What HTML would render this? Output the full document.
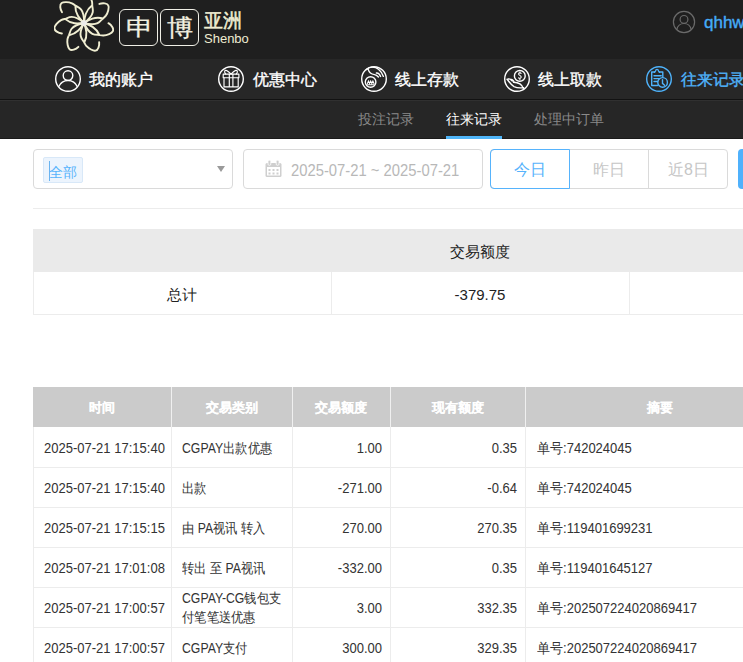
<!DOCTYPE html>
<html><head><meta charset="utf-8">
<style>
*{box-sizing:border-box;margin:0;padding:0}
html,body{width:743px;height:662px;overflow:hidden;background:#fff;font-family:"Liberation Sans",sans-serif;position:relative}
.abs{position:absolute}
.navt{position:absolute;top:69px;color:#fff;font-size:16px;line-height:22px;white-space:nowrap;-webkit-text-stroke:0.35px currentColor}
.subt{position:absolute;top:109px;color:#8a8a8a;font-size:14px;line-height:20px;white-space:nowrap}
.box{position:absolute;border:1px solid #dadada;border-radius:4px;background:#fff}
.btn{position:absolute;top:150px;height:40px;color:#c6c6c6;font-size:16px;line-height:40px;text-align:center}
.hl{position:absolute;height:1px;background:#ececec}
.vl{position:absolute;width:1px;background:#ececec}
.c{position:absolute;font-size:14px;line-height:18px;color:#333;white-space:nowrap;transform:scaleX(0.93);transform-origin:0 0}
.cr{transform-origin:100% 0}
.h{position:absolute;top:399px;font-size:13px;line-height:18px;color:#fff;font-weight:bold;text-align:center;-webkit-text-stroke:0.1px #fff}
</style></head><body>
<div class="abs" style="left:0;top:0;width:743px;height:59px;background:#1f1f1f"></div>
<div class="abs" style="left:0;top:59px;width:743px;height:40px;background:#272727"></div>
<div class="abs" style="left:0;top:99px;width:743px;height:1px;background:#121212"></div>
<div class="abs" style="left:0;top:100px;width:743px;height:1px;background:#303030"></div>
<div class="abs" style="left:0;top:101px;width:743px;height:37px;background:#262626"></div>
<div class="abs" style="left:0;top:138px;width:743px;height:1px;background:#1a1a1a"></div>

<svg class="abs" style="left:54px;top:-7px" width="60" height="60" viewBox="-30 -30 60 60"><g fill="none" stroke="#f0eed2" stroke-width="1.9" stroke-linecap="round"><g transform="rotate(25.00)"><path d="M0,0 C2.2,-4 4.2,-9.5 3.4,-13.2 C2.8,-16 0.8,-18 0,-19.5 C-0.6,-20.8 -1,-21.8 -2,-23 C-4.5,-25.8 -9,-28.2 -11.2,-27.8 C-13.8,-27.4 -15.3,-23 -14.9,-19.4 M0,0 C-2,-6 -4,-12 0,-19.5"/></g><g transform="rotate(76.43)"><path d="M0,0 C2.2,-4 4.2,-9.5 3.4,-13.2 C2.8,-16 0.8,-18 0,-19.5 C-0.6,-20.8 -1,-21.8 -2,-23 C-4.5,-25.8 -9,-28.2 -11.2,-27.8 C-13.8,-27.4 -15.3,-23 -14.9,-19.4 M0,0 C-2,-6 -4,-12 0,-19.5"/></g><g transform="rotate(127.86)"><path d="M0,0 C2.2,-4 4.2,-9.5 3.4,-13.2 C2.8,-16 0.8,-18 0,-19.5 C-0.6,-20.8 -1,-21.8 -2,-23 C-4.5,-25.8 -9,-28.2 -11.2,-27.8 C-13.8,-27.4 -15.3,-23 -14.9,-19.4 M0,0 C-2,-6 -4,-12 0,-19.5"/></g><g transform="rotate(179.29)"><path d="M0,0 C2.2,-4 4.2,-9.5 3.4,-13.2 C2.8,-16 0.8,-18 0,-19.5 C-0.6,-20.8 -1,-21.8 -2,-23 C-4.5,-25.8 -9,-28.2 -11.2,-27.8 C-13.8,-27.4 -15.3,-23 -14.9,-19.4 M0,0 C-2,-6 -4,-12 0,-19.5"/></g><g transform="rotate(230.71)"><path d="M0,0 C2.2,-4 4.2,-9.5 3.4,-13.2 C2.8,-16 0.8,-18 0,-19.5 C-0.6,-20.8 -1,-21.8 -2,-23 C-4.5,-25.8 -9,-28.2 -11.2,-27.8 C-13.8,-27.4 -15.3,-23 -14.9,-19.4 M0,0 C-2,-6 -4,-12 0,-19.5"/></g><g transform="rotate(282.14)"><path d="M0,0 C2.2,-4 4.2,-9.5 3.4,-13.2 C2.8,-16 0.8,-18 0,-19.5 C-0.6,-20.8 -1,-21.8 -2,-23 C-4.5,-25.8 -9,-28.2 -11.2,-27.8 C-13.8,-27.4 -15.3,-23 -14.9,-19.4 M0,0 C-2,-6 -4,-12 0,-19.5"/></g><g transform="rotate(333.57)"><path d="M0,0 C2.2,-4 4.2,-9.5 3.4,-13.2 C2.8,-16 0.8,-18 0,-19.5 C-0.6,-20.8 -1,-21.8 -2,-23 C-4.5,-25.8 -9,-28.2 -11.2,-27.8 C-13.8,-27.4 -15.3,-23 -14.9,-19.4 M0,0 C-2,-6 -4,-12 0,-19.5"/></g></g><circle r="2.8" fill="#ededea"/></svg>
<div class="abs" style="left:119px;top:9px;width:39px;height:37px;border:1.3px solid #f0efe6;border-radius:6px;color:#f2f0e0;font-size:25px;line-height:34px;text-align:center"><span style="display:inline-block;transform:scale(1.1,0.92) translateX(1.5px);-webkit-text-stroke:0.3px #f2f0e0">申</span></div>
<div class="abs" style="left:160px;top:9px;width:39px;height:37px;border:1.3px solid #f0efe6;border-radius:6px;color:#f2f0e0;font-size:25px;line-height:34px;text-align:center"><span style="display:inline-block;transform:scale(1.04,0.95);-webkit-text-stroke:0.3px #f2f0e0">博</span></div>
<div class="abs" style="left:204px;top:10px;color:#efedd2;font-size:19px;line-height:22px;-webkit-text-stroke:0.5px #efedd2">亚洲</div>
<div class="abs" style="left:204px;top:31px;color:#efedd2;font-size:13px;line-height:15px">Shenbo</div>

<svg class="abs" style="left:669px;top:7px" width="30" height="30" viewBox="-15 -15 30 30"><g fill="none" stroke="#6a6a6a" stroke-width="1.2"><circle r="10.6"/><circle cx="0" cy="-2.6" r="3.9"/><path d="M-7.2,7.6 A7.3,7.3 0 0 1 7.2,7.6"/></g></svg>
<div class="abs" style="left:704px;top:12px;color:#45acf8;font-size:17px;line-height:22px;-webkit-text-stroke:0.4px #45acf8">qhhw</div>

<svg class="abs" style="left:53px;top:64px" width="30" height="30" viewBox="-15 -15 30 30"><g fill="none" stroke="#fff" stroke-width="1.4" stroke-linecap="round" stroke-linejoin="round"><circle r="12.3"/><circle cx="0" cy="-3.4" r="4.8"/><path d="M-9.2,7.6 A10,10 0 0 1 9.2,7.6"/></g></svg>
<svg class="abs" style="left:216px;top:64px" width="30" height="30" viewBox="-15 -15 30 30"><g fill="none" stroke="#fff" stroke-width="1.4" stroke-linecap="round" stroke-linejoin="round"><circle r="12.3"/><g stroke-width="1.15"><rect x="-7.8" y="-4.9" width="15.7" height="3.6"/><path d="M-7,-1.3 V7.9 H7.2 V-1.3 M-1.7,-4.9 V7.9 M1.9,-4.9 V7.9"/><path d="M0.1,-4.9 C-2,-7 -4,-9 -5.5,-8.6 C-6.8,-8.2 -6.6,-6.2 -5.2,-4.9 M0.1,-4.9 C2,-7 4,-9 5.5,-8.6 C6.8,-8.2 6.6,-6.2 5.2,-4.9"/></g></g></svg>
<svg class="abs" style="left:359px;top:64px" width="30" height="30" viewBox="-15 -15 30 30"><g fill="none" stroke="#fff" stroke-width="1.4" stroke-linecap="round" stroke-linejoin="round"><circle r="12.3"/><circle cx="-3.4" cy="3" r="5.3"/><path d="M-6.6,4.4 L-5.5,2 L-4.4,4.4 L-3.3,2 L-2.2,4.4 L-1.1,2 L0,4.4 M-6.6,5.8 H0" stroke-width="1.1" stroke-linejoin="miter"/><path d="M-7.8,-9.6 C-4.5,-12.6 1,-12.6 4.5,-9.8 C6.6,-8 8.5,-5.2 9.4,-2.6 M-5.8,-9.6 C-5,-6.6 -2.5,-4.8 0.5,-4.4 C2.2,-4.2 3.4,-3.2 4.4,-2 M2.4,-6 C4,-6.3 5.6,-5 6.6,-2.6" /></g></svg>
<svg class="abs" style="left:502px;top:64px" width="30" height="30" viewBox="-15 -15 30 30"><g fill="none" stroke="#fff" stroke-width="1.4" stroke-linecap="round" stroke-linejoin="round"><circle r="12.3"/><circle cx="2.8" cy="-3.1" r="5.4"/><path d="M4.1,-5.6 C3.3,-6.4 1.6,-6.3 1.6,-5 C1.6,-3.6 4.2,-3.6 4.2,-1.9 C4.2,-0.6 2.4,-0.4 1.5,-1.2 M2.9,-7 V-6.2 M2.9,-0.4 V0.4" stroke-width="1.1"/><path d="M-10,0.2 C-8,2.5 -6,6 -3,7.6 C0,9 4,9 6.6,8.6 M-8.8,0 C-7.4,-0.6 -6,0.5 -4.7,2 M-6.3,0.7 C-5,0 -3.6,1.5 -2.7,3.3 M-3.5,3.3 C1,3.5 5,5.5 6.4,9.5"/></g></svg>
<svg class="abs" style="left:644px;top:64px" width="30" height="30" viewBox="-15 -15 30 30"><g fill="none" stroke="#4fb3fb" stroke-width="1.4" stroke-linecap="round" stroke-linejoin="round"><circle r="12.3"/><path d="M-1.5,6.5 H-7.3 V-7 H-4.2 M0.2,-7 H3.8 V-1.8" /><path d="M-4.6,-6.6 C-4,-7.6 -3.6,-7.4 -3.3,-8.3 A1.3,1.3 0 1 1 -0.7,-8.3 C-0.4,-7.4 0,-7.6 0.6,-6.6" stroke-width="1.2"/><path d="M-5,-3.3 H2.2 M-5,-0.4 H0.2 M-5,2.5 H-1.5"/><circle cx="3.6" cy="3.4" r="4.8"/><path d="M3.5,0.6 V4.4 L5.6,6.2"/></g></svg>
<div class="navt" style="left:89px">我的账户</div>
<div class="navt" style="left:253px">优惠中心</div>
<div class="navt" style="left:395px">线上存款</div>
<div class="navt" style="left:538px">线上取款</div>
<div class="navt" style="left:681px;color:#4fb3fb">往来记录</div>

<div class="subt" style="left:358px">投注记录</div>
<div class="subt" style="left:446px;color:#fff">往来记录</div>
<div class="abs" style="left:446px;top:136px;width:56px;height:3px;background:#4fb5f8"></div>
<div class="subt" style="left:534px">处理中订单</div>

<div class="box" style="left:33px;top:149px;width:200px;height:40px"></div>
<div class="abs" style="left:43px;top:157px;width:40px;height:26px;background:#ecf4fd;border:1px solid #d8e8f8;border-radius:2px"></div>
<div class="abs" style="left:49px;top:161px;width:1px;height:20px;background:#6ab4f0"></div>
<div class="abs" style="left:49px;top:162px;color:#56b3fc;font-size:14px;line-height:20px">全部</div>
<div class="abs" style="left:217px;top:166px;width:0;height:0;border-left:4px solid transparent;border-right:4px solid transparent;border-top:6px solid #9a9a9a"></div>

<div class="box" style="left:243px;top:149px;width:240px;height:40px"></div>
<svg class="abs" style="left:265px;top:160px" width="18" height="18" viewBox="0 0 18 18">
<rect x="0.5" y="3" width="16" height="14" rx="1.5" fill="#cfcfcf"/><rect x="2" y="7" width="13" height="8.5" fill="#fff"/>
<rect x="3" y="0.3" width="2.8" height="5" rx="1.2" fill="#cfcfcf" stroke="#fff" stroke-width="0.8"/><rect x="11.2" y="0.3" width="2.8" height="5" rx="1.2" fill="#cfcfcf" stroke="#fff" stroke-width="0.8"/>
<g fill="#cfcfcf"><rect x="3.5" y="9" width="2" height="2"/><rect x="7.5" y="9" width="2" height="2"/><rect x="11.5" y="9" width="2" height="2"/><rect x="3.5" y="12.5" width="2" height="2"/><rect x="7.5" y="12.5" width="2" height="2"/><rect x="11.5" y="12.5" width="2" height="2"/></g>
</svg>
<div class="abs" style="left:291px;top:161px;color:#b8b8b8;font-size:16px;line-height:20px;transform:scaleX(0.925);transform-origin:0 0;white-space:nowrap">2025-07-21 ~ 2025-07-21</div>

<div class="abs" style="left:490px;top:149px;width:238px;height:40px;border:1px solid #dadada;border-radius:4px"></div>
<div class="abs" style="left:648px;top:149px;width:1px;height:40px;background:#dadada"></div>
<div class="abs" style="left:490px;top:149px;width:80px;height:40px;border:1px solid #56b3fc;border-radius:4px 0 0 4px"></div>
<div class="btn" style="left:490px;width:80px;color:#56b3fc">今日</div>
<div class="btn" style="left:570px;width:78px">昨日</div>
<div class="btn" style="left:649px;width:79px">近8日</div>
<div class="abs" style="left:738px;top:149px;width:12px;height:40px;background:#4fb1fc;border-radius:4px"></div>
<div class="hl" style="left:33px;top:208px;width:710px"></div>

<div class="abs" style="left:33px;top:229px;width:710px;height:43px;background:#eaeaea"></div>
<div class="abs" style="left:33px;top:242px;width:894px;text-align:center;font-size:15px;line-height:20px;color:#222">交易额度</div>
<div class="vl" style="left:33px;top:272px;height:43px"></div>
<div class="vl" style="left:331px;top:272px;height:42px"></div>
<div class="vl" style="left:629px;top:272px;height:42px"></div>
<div class="hl" style="left:33px;top:314px;width:710px"></div>
<div class="abs" style="left:33px;top:285px;width:298px;text-align:center;font-size:15px;line-height:20px;color:#222">总计</div>
<div class="abs" style="left:331px;top:285px;width:298px;text-align:center;font-size:15px;line-height:20px;color:#222">-379.75</div>

<div class="abs" style="left:33px;top:387px;width:710px;height:40px;background:#cbcbcb"></div>
<div class="h" style="left:33px;width:138px">时间</div>
<div class="h" style="left:171px;width:121px">交易类别</div>
<div class="h" style="left:292px;width:98px">交易额度</div>
<div class="h" style="left:390px;width:135px">现有额度</div>
<div class="h" style="left:525px;width:270px">摘要</div>
<div class="abs" style="left:171px;top:387px;width:1px;height:40px;background:#f0f0f0"></div>
<div class="abs" style="left:292px;top:387px;width:1px;height:40px;background:#f0f0f0"></div>
<div class="abs" style="left:390px;top:387px;width:1px;height:40px;background:#f0f0f0"></div>
<div class="abs" style="left:525px;top:387px;width:1px;height:40px;background:#f0f0f0"></div>
<div class="hl" style="left:33px;top:467px;width:710px"></div>
<div class="c" style="left:44px;top:439px">2025-07-21 17:15:40</div>
<div class="c" style="left:182px;top:439px;transform:scaleX(0.875)">CGPAY出款优惠</div>
<div class="c cr" style="left:292px;width:90px;text-align:right;top:439px">1.00</div>
<div class="c cr" style="left:390px;width:127px;text-align:right;top:439px">0.35</div>
<div class="c" style="left:537px;top:439px">单号:742024045</div>
<div class="hl" style="left:33px;top:507px;width:710px"></div>
<div class="c" style="left:44px;top:479px">2025-07-21 17:15:40</div>
<div class="c" style="left:182px;top:479px;transform:scaleX(0.875)">出款</div>
<div class="c cr" style="left:292px;width:90px;text-align:right;top:479px">-271.00</div>
<div class="c cr" style="left:390px;width:127px;text-align:right;top:479px">-0.64</div>
<div class="c" style="left:537px;top:479px">单号:742024045</div>
<div class="hl" style="left:33px;top:547px;width:710px"></div>
<div class="c" style="left:44px;top:519px">2025-07-21 17:15:15</div>
<div class="c" style="left:182px;top:519px;transform:scaleX(0.875)">由 PA视讯 转入</div>
<div class="c cr" style="left:292px;width:90px;text-align:right;top:519px">270.00</div>
<div class="c cr" style="left:390px;width:127px;text-align:right;top:519px">270.35</div>
<div class="c" style="left:537px;top:519px">单号:119401699231</div>
<div class="hl" style="left:33px;top:587px;width:710px"></div>
<div class="c" style="left:44px;top:559px">2025-07-21 17:01:08</div>
<div class="c" style="left:182px;top:559px;transform:scaleX(0.875)">转出 至 PA视讯</div>
<div class="c cr" style="left:292px;width:90px;text-align:right;top:559px">-332.00</div>
<div class="c cr" style="left:390px;width:127px;text-align:right;top:559px">0.35</div>
<div class="c" style="left:537px;top:559px">单号:119401645127</div>
<div class="hl" style="left:33px;top:627px;width:710px"></div>
<div class="c" style="left:44px;top:599px">2025-07-21 17:00:57</div>
<div class="c" style="left:182px;top:589px;line-height:19px;transform:scaleX(0.875)">CGPAY-CG钱包支<br>付笔笔送优惠</div>
<div class="c cr" style="left:292px;width:90px;text-align:right;top:599px">3.00</div>
<div class="c cr" style="left:390px;width:127px;text-align:right;top:599px">332.35</div>
<div class="c" style="left:537px;top:599px">单号:202507224020869417</div>
<div class="hl" style="left:33px;top:667px;width:710px"></div>
<div class="c" style="left:44px;top:639px">2025-07-21 17:00:57</div>
<div class="c" style="left:182px;top:639px;transform:scaleX(0.875)">CGPAY支付</div>
<div class="c cr" style="left:292px;width:90px;text-align:right;top:639px">300.00</div>
<div class="c cr" style="left:390px;width:127px;text-align:right;top:639px">329.35</div>
<div class="c" style="left:537px;top:639px">单号:202507224020869417</div>
<div class="vl" style="left:33px;top:427px;height:240px"></div>
<div class="vl" style="left:171px;top:427px;height:240px"></div>
<div class="vl" style="left:292px;top:427px;height:240px"></div>
<div class="vl" style="left:390px;top:427px;height:240px"></div>
<div class="vl" style="left:525px;top:427px;height:240px"></div>
</body></html>
